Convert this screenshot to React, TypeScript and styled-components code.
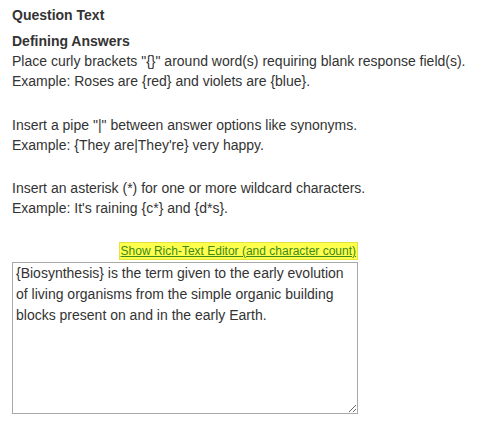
import React from "react";
import styled, { createGlobalStyle } from "styled-components";

const GlobalStyle = createGlobalStyle`
  body {
    margin: 0;
    background: #fff;
    font-family: "Liberation Sans", Arial, sans-serif;
    font-size: 14px;
    line-height: 20px;
    color: #333;
  }
`;

const Panel = styled.div`
  padding: 5px 12px 0 12px;
  width: 346px;
`;

const Title = styled.div`
  font-weight: bold;
  margin-bottom: 6px;
`;

const SubTitle = styled.div`
  font-weight: bold;
`;

const Para = styled.p<{ $gap?: number }>`
  margin: 0 0 ${(p) => (p.$gap ?? 24)}px 0;
  white-space: nowrap;
`;

const LinkRow = styled.div`
  display: flex;
  justify-content: flex-end;
  margin-top: 24px;
  margin-bottom: 2px;
`;

const EditorLink = styled.a`
  font-size: 12px;
  line-height: 14px;
  color: #3d8a1a;
  text-decoration: underline;
  background: #ffff4d;
  border: 1px solid #e4e43a;
  padding: 1px 1px;
  cursor: pointer;
`;

const Answer = styled.textarea`
  display: block;
  box-sizing: border-box;
  width: 346px;
  height: 152px;
  margin: 0;
  padding: 0 3px;
  border: 1px solid #a9a9a9;
  font-family: "Liberation Sans", Arial, sans-serif;
  font-size: 14px;
  line-height: 21px;
  color: #333;
  resize: both;
  outline: none;
`;

export default function App() {
  return (
    <>
      <GlobalStyle />
      <Panel>
        <Title>Question Text</Title>
        <SubTitle>Defining Answers</SubTitle>
        <Para>
          Place curly brackets "{"{}"}" around word(s) requiring blank response field(s).
          <br />
          Example: Roses are {"{red}"} and violets are {"{blue}"}.
        </Para>
        <Para $gap={23}>
          Insert a pipe "|" between answer options like synonyms.
          <br />
          Example: {"{They are|They're}"} very happy.
        </Para>
        <Para $gap={0}>
          Insert an asterisk (*) for one or more wildcard characters.
          <br />
          Example: It's raining {"{c*}"} and {"{d*s}"}.
        </Para>
        <LinkRow>
          <EditorLink>Show Rich-Text Editor (and character count)</EditorLink>
        </LinkRow>
        <Answer
          defaultValue="{Biosynthesis} is the term given to the early evolution of living organisms from the simple organic building blocks present on and in the early Earth."
        />
      </Panel>
    </>
  );
}
